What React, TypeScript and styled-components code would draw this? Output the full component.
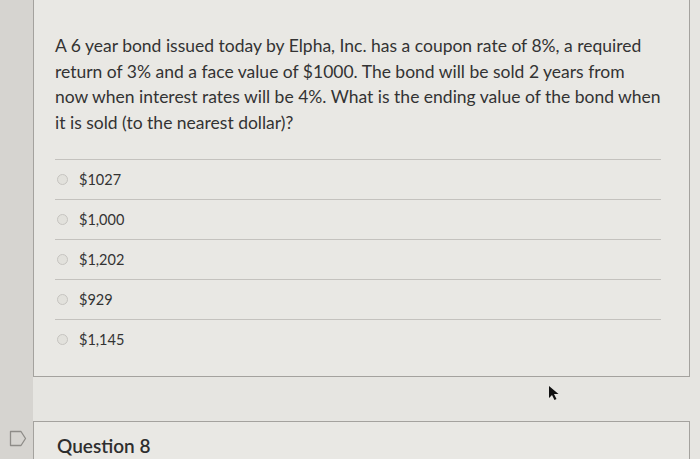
import styled, { createGlobalStyle } from "styled-components";

const GlobalStyle = createGlobalStyle`
  html, body {
    margin: 0;
    padding: 0;
    background: #e6e5e1;
    font-family: Lato, "Open Sans", sans-serif;
    color: #353535;
  }
`;

const Page = styled.div`
  position: relative;
  display: grid;
  grid-template-columns: 33px 1fr;
  width: 700px;
  height: 459px;
  overflow: hidden;
`;

const Gutter = styled.div`
  background: #d6d4d0;
  display: flex;
  flex-direction: column;
  align-items: center;
  padding-top: 430px;
  padding-left: 3px;
`;

const Main = styled.div`
  display: flex;
  flex-direction: column;
  gap: 44px;
  padding-right: 10px;
`;

const Card = styled.section`
  border: 1px solid #a4a29e;
  border-top: none;
  background: #e9e8e4;
  padding: 33px 28px 17px 21px;
`;

const NextCard = styled.section`
  border: 1px solid #a4a29e;
  border-bottom: none;
  background: #e9e8e4;
  padding: 14px 24px 0 23px;
  flex: 1;
`;

const Question = styled.p`
  margin: 0 0 24px;
  font-size: 17.5px;
  line-height: 25.5px;
  color: #333;
`;

const Options = styled.ul`
  list-style: none;
  margin: 0;
  padding: 0;
`;

const Option = styled.li`
  display: flex;
  align-items: center;
  gap: 11px;
  height: 39px;
  border-top: 1px solid #c4c2be;
  padding-left: 2px;
  font-size: 14.5px;
  color: #333;
`;

const Radio = styled.span`
  width: 11px;
  height: 11px;
  border-radius: 50%;
  border: 1px solid #c6c4c0;
  background: #e2e1dc;
  box-sizing: border-box;
`;

const Heading = styled.h2`
  margin: 0;
  font-size: 19px;
  line-height: 20px;
  font-weight: 600;
  color: #2e2e2e;
`;

const Cursor = styled.svg`
  position: absolute;
  left: 548px;
  top: 385px;
`;

const answers = ["$1027", "$1,000", "$1,202", "$929", "$1,145"];

export default function App() {
  return (
    <>
      <GlobalStyle />
      <Page>
        <Gutter>
          <svg width="18" height="17" viewBox="0 0 18 17">
            <path
              d="M1.5 1.5 H12 L16.5 8.5 L12 15.5 H1.5 Z"
              fill="none"
              stroke="#8e8c88"
              strokeWidth="1.3"
              strokeLinejoin="round"
            />
          </svg>
        </Gutter>
        <Main>
          <Card>
            <Question>
              A 6 year bond issued today by Elpha, Inc. has a coupon rate of 8%, a required
              <br />
              return of 3% and a face value of $1000. The bond will be sold 2 years from
              <br />
              now when interest rates will be 4%. What is the ending value of the bond when
              <br />
              it is sold (to the nearest dollar)?
            </Question>
            <Options>
              {answers.map((a) => (
                <Option key={a}>
                  <Radio />
                  {a}
                </Option>
              ))}
            </Options>
          </Card>
          <NextCard>
            <Heading>Question 8</Heading>
          </NextCard>
        </Main>
        <Cursor width="12" height="16" viewBox="0 0 12 16">
          <path d="M1 1 L1 13 L4 10 L6.5 15 L8.5 14 L6 9 L10.5 9 Z" fill="#111" />
        </Cursor>
      </Page>
    </>
  );
}
